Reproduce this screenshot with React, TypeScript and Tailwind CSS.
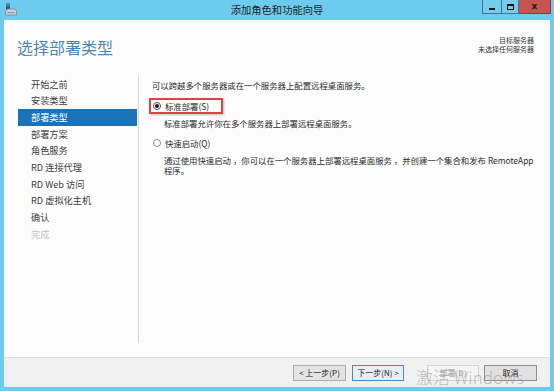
import React from 'react';

const navItems = [
  { label: '开始之前' },
  { label: '安装类型' },
  { label: '部署类型', active: true },
  { label: '部署方案' },
  { label: '角色服务' },
  { label: 'RD 连接代理' },
  { label: 'RD Web 访问' },
  { label: 'RD 虚拟化主机' },
  { label: '确认' },
  { label: '完成', disabled: true },
];

function WindowIcon() {
  return (
    <svg width="12" height="13" viewBox="0 0 12 13">
      <rect x="1" y="0.5" width="4" height="6" fill="#2a5d9a" />
      <rect x="1.5" y="1.5" width="3" height="1" fill="#8fc3ee" />
      <path d="M1 7.5 L3 6 H10 L11.5 8 V12 H0.5 V8 Z" fill="#c9d2da" stroke="#7d8893" strokeWidth="0.8" />
      <rect x="2.5" y="9" width="7" height="1.2" fill="#8f9aa5" />
    </svg>
  );
}

function Radio({ checked }: { checked?: boolean }) {
  return (
    <span
      className={`w-[8px] h-[8px] rounded-full border bg-white flex items-center justify-center shrink-0 ${
        checked ? 'border-[#4d4d4d]' : 'border-[#8a8a8a]'
      }`}
    >
      {checked && <span className="w-[4px] h-[4px] rounded-full bg-[#1a1a1a]" />}
    </span>
  );
}

export default function App() {
  return (
    <div className="w-[554px] h-[391px] bg-[#6ccbee] flex flex-col relative overflow-hidden font-['Noto_Sans_CJK_SC','Noto_Sans',sans-serif]">
      {/* Title bar */}
      <div className="h-[20px] grid grid-cols-[1fr_auto_1fr] shrink-0">
        <div className="pl-[5px] pt-[3px]">
          <WindowIcon />
        </div>
        <div className="text-[10.3px] leading-[20px] text-[#1f1f1f]">添加角色和功能向导</div>
        <div className="flex justify-end items-start pr-[3px]">
          <div className="flex h-[14px]">
            <div className="w-[20px] h-[14px] border border-[#3a7697] border-t-0 bg-[#72ccec] flex items-end justify-center pb-[3px]">
              <span className="w-[6px] h-[2px] bg-[#111]" />
            </div>
            <div className="w-[17px] h-[14px] border border-[#3a7697] border-t-0 border-l-0 bg-[#72ccec] flex items-center justify-center">
              <span className="w-[7px] h-[6px] border border-[#111] border-t-2" />
            </div>
            <div className="w-[32px] h-[14px] bg-[#c75450] border border-[#8e3a37] border-t-0 border-l-0 flex items-center justify-center text-[9px] font-bold text-[#1c1c1c] leading-none font-['DejaVu_Sans',sans-serif]">
              x
            </div>
          </div>
        </div>
      </div>

      {/* Window body */}
      <div className="flex-1 mx-[4px] mb-[4px] bg-[#fcfcfc] flex flex-col min-h-0">
        {/* Header */}
        <div className="h-[55px] shrink-0 flex justify-between items-start pl-[13px] pr-[16px] pt-[16px]">
          <div className="mt-[3px] text-[16px] leading-[16px] text-[#4a86b4]">选择部署类型</div>
          <div className="text-right text-[7px] leading-[9.3px] text-[#333]">
            <div>目标服务器</div>
            <div>未选择任何服务器</div>
          </div>
        </div>

        {/* Middle */}
        <div className="flex-1 flex pb-[14px] min-h-0">
          <div className="w-[135px] border-r border-[#d6d6d6] pl-[14px] pr-[1px] pt-[1px] shrink-0">
            {navItems.map((item) => (
              <div
                key={item.label}
                className={`h-[16.67px] pl-[13px] flex items-center text-[9.2px] leading-none ${
                  item.active
                    ? 'bg-[#1a72b8] text-white'
                    : item.disabled
                    ? 'text-[#c4c4c4]'
                    : 'text-[#3d3d3d]'
                }`}
              >
                {item.label}
              </div>
            ))}
          </div>

          <div className="flex-1 pl-[13px] pt-[5px] text-[8.4px] leading-[10px] text-[#2b2b2b] whitespace-nowrap">
            <p>可以跨越多个服务器或在一个服务器上配置远程桌面服务。</p>

            <div className="relative mt-[11px] flex items-center gap-[4px] pl-[1px] h-[10px]">
              <Radio checked />
              <span>标准部署(S)</span>
              <span className="absolute left-[-3px] top-[-3px] w-[74px] h-[16px] border-2 border-[#d9463f] shadow-[1px_1px_2px_rgba(0,0,0,0.25)]" />
            </div>
            <p className="mt-[7px] ml-[12px]">标准部署允许你在多个服务器上部署远程桌面服务。</p>

            <div className="mt-[10px] flex items-center gap-[4px] pl-[1px] h-[10px]">
              <Radio />
              <span>快速启动(Q)</span>
            </div>
            <p className="mt-[7px] ml-[12px] leading-[10px]">
              通过使用快速启动 ，你可以在一个服务器上部署远程桌面服务 ，并创建一个集合和发布 RemoteApp
              <br />
              程序。
            </p>
          </div>
        </div>

        {/* Footer */}
        <div className="h-[30px] shrink-0 bg-[#f0f0f0] border-t border-[#e0e0e0] flex items-center justify-end pr-[13px] text-[8px] leading-none">
          <button className="w-[53px] h-[16px] bg-[#e3e3e3] border border-[#acacac] text-[#222]">&lt; 上一步(P)</button>
          <button className="ml-[6px] w-[52px] h-[16px] bg-[#e8eef4] border border-[#4b8ac0] text-[#222]">下一步(N) &gt;</button>
          <button className="ml-[23px] w-[52px] h-[16px] bg-[#f4f4f4] border border-[#d3d3d3] text-[#a3a3a3]">部署(D)</button>
          <button className="ml-[5px] w-[53px] h-[16px] bg-[#e1e1e1] border border-[#8f8f8f] text-[#222]">取消</button>
        </div>
      </div>

      {/* Activation watermark */}
      <div className="absolute left-[416px] top-[367px] text-[17px] leading-[20px] text-[#9a9a9a]/60 pointer-events-none font-light">
        激活 Windows
      </div>
    </div>
  );
}
